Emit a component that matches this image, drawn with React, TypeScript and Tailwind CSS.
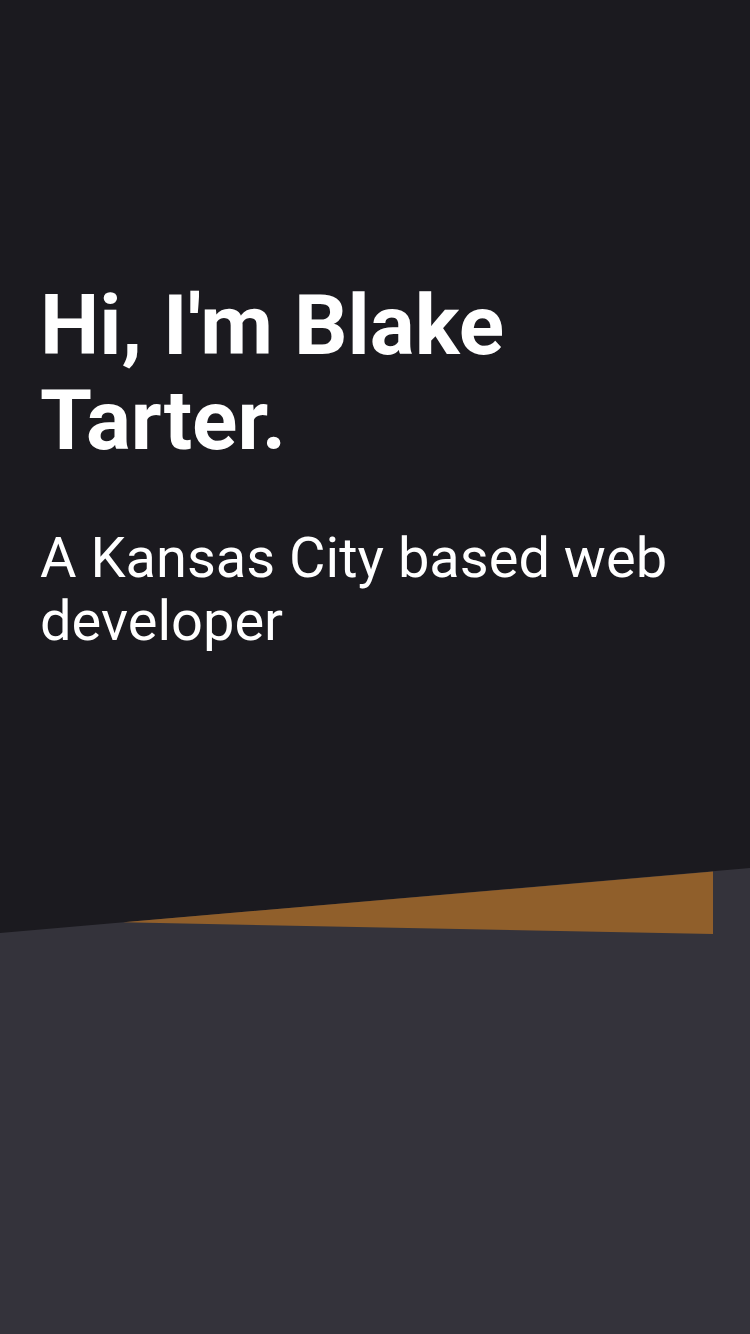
import React from 'react';

const Divider: React.FC = () => (
    <svg viewBox="0 0 750 70" className="block w-full h-[70px]" preserveAspectRatio="none">
        <rect x="0" y="0" width="750" height="70" fill="#1b1a1f" />
        <polygon points="0,65 750,0 750,70 0,70" fill="#34333b" />
        <polygon points="123,54.3 713,3.5 713,66 123,54.3" fill="#905f2b" />
    </svg>
);

const App: React.FC = () => {
    return (
        <div className="min-h-[1334px] flex flex-col bg-[#34333b] font-['Roboto',sans-serif]">
            <section className="h-[868px] bg-[#1b1a1f] px-10 pt-[278px] text-white">
                <h1 className="text-[84px] leading-[95px] font-bold">Hi, I'm Blake Tarter.</h1>
                <p className="mt-[59px] text-[56px] leading-[63px] font-normal">A Kansas City based web developer</p>
            </section>
            <Divider />
            <div className="flex-1" />
        </div>
    );
};

export default App;
